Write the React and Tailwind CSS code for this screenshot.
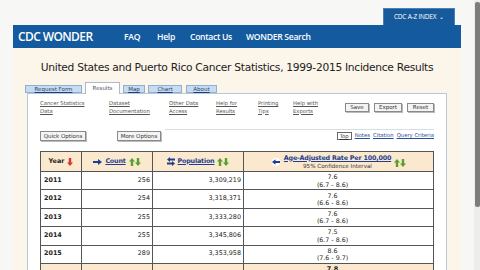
import React from "react";

const verdana = { fontFamily: '"DejaVu Sans", Verdana, sans-serif' };

function SortArrows() {
  return (
    <svg width="12" height="8" viewBox="0 0 12 8" className="inline-block">
      <path d="M3 0 L6 3.5 H4.2 V8 H1.8 V3.5 H0 Z" fill="#5aa02c" />
      <path d="M9 8 L12 4.5 H10.2 V0 H7.8 V4.5 H6 Z" fill="#5aa02c" />
    </svg>
  );
}

function RedDown() {
  return (
    <svg width="6" height="8" viewBox="0 0 6 8" className="inline-block">
      <path d="M3 8 L6 4.5 H4.2 V0 H1.8 V4.5 H0 Z" fill="#d2392b" />
    </svg>
  );
}

function RightArrow() {
  return (
    <svg width="9" height="6" viewBox="0 0 9 6" className="inline-block">
      <path d="M0 2 H5 V0 L9 3 L5 6 V4 H0 Z" fill="#1d3f8f" />
    </svg>
  );
}

function LeftArrow() {
  return (
    <svg width="10" height="8" viewBox="0 0 10 8" className="inline-block">
      <circle cx="5" cy="4" r="4" fill="#ffffff" />
      <path d="M9 3 H4.5 V1.3 L1 4 L4.5 6.7 V5 H9 Z" fill="#1d3f8f" />
    </svg>
  );
}

function SwapArrows() {
  return (
    <svg width="8" height="9" viewBox="0 0 8 9" className="inline-block">
      <path d="M8 1.5 H3 V0 L0 2.5 L3 5 V3.5 H8 Z" fill="#1d3f8f" />
      <path d="M0 5.5 H5 V4 L8 6.5 L5 9 V7.5 H0 Z" fill="#1d3f8f" />
    </svg>
  );
}

const rows = [
  ["2011", "256", "3,309,219", "7.6", "(6.7 - 8.6)"],
  ["2012", "254", "3,318,371", "7.6", "(6.6 - 8.6)"],
  ["2013", "255", "3,333,280", "7.6", "(6.7 - 8.6)"],
  ["2014", "255", "3,345,806", "7.5", "(6.7 - 8.6)"],
  ["2015", "289", "3,353,958", "8.6", "(7.6 - 9.7)"],
];

const links = [
  ["Cancer Statistics", "Data", "w-[69px]"],
  ["Dataset", "Documentation", "w-[60px]"],
  ["Other Data", "Access", "w-[47px]"],
  ["Help for", "Results", "w-[42px]"],
  ["Printing", "Tips", "w-[35px]"],
  ["Help with", "Exports", "w-[40px]"],
];

function Btn({ children, className = "" }) {
  return (
    <div
      className={`h-[9px] flex items-center justify-center border border-[#8a8a8a] bg-[#f4f4f4] text-[5.5px] text-[#333] shadow-[1px_1px_0_#bbb] ${className}`}
    >
      {children}
    </div>
  );
}

export default function App() {
  return (
    <div className="w-[480px] h-[270px] overflow-hidden flex bg-[#f7f7f5]">
      <div className="w-[474px] h-[270px] flex flex-col overflow-hidden">
        {/* top strip */}
        <div className="h-[25px] shrink-0 flex justify-end items-end pr-[19px]">
          <div
            className="w-[72px] h-[17px] bg-[#175a9b] border-t border-x border-[#4b7fb5] flex items-center justify-center gap-[3px] text-white text-[6.5px] tracking-[-0.2px]"
            style={{ fontFamily: '"Open Sans", sans-serif' }}
          >
            <span>CDC A-Z INDEX</span>
            <span className="text-[6px]">⌄</span>
          </div>
        </div>

        {/* nav bar */}
        <div
          className="mx-[13px] h-[23px] shrink-0 bg-[#135a9e] flex items-center text-white"
          style={{ fontFamily: '"Open Sans", sans-serif' }}
        >
          <div className="ml-[5px] w-[106px] text-[12px] font-semibold tracking-[-0.6px] leading-none">
            CDC WONDER
          </div>
          <div className="flex items-center text-[8.6px] font-semibold tracking-[-0.3px] pt-[1px]">
            <span className="w-[33px]">FAQ</span>
            <span className="w-[33px]">Help</span>
            <span className="w-[56px]">Contact Us</span>
            <span>WONDER Search</span>
          </div>
        </div>

        {/* content */}
        <div className="mx-[13px] shrink-0 h-[250px] bg-[#fcf5e9] flex flex-col px-[14px]" style={verdana}>
          <div className="h-[35px] shrink-0 flex items-center justify-center pt-[5px] text-[10.7px] text-[#222] tracking-[-0.3px]">
            United States and Puerto Rico Cancer Statistics, 1999-2015 Incidence Results
          </div>

          {/* tabs */}
          <div className="h-[11px] shrink-0 flex items-end text-[5.5px] text-[#1f3f7a] relative z-10">
            <div className="ml-[-2px] w-[57px] h-[8px] mb-[1px] bg-[#c7dcf0] border border-[#8fb0d4] flex items-center justify-center underline">
              Request Form
            </div>
            <div className="ml-[3px] w-[35px] h-[12px] bg-white border-x border-t border-[#a9bccf] flex items-center justify-center text-[#555]">
              Results
            </div>
            <div className="ml-[3px] w-[22px] h-[8px] mb-[1px] bg-[#c7dcf0] border border-[#8fb0d4] flex items-center justify-center underline">
              Map
            </div>
            <div className="ml-[3px] w-[34px] h-[8px] mb-[1px] bg-[#c7dcf0] border border-[#8fb0d4] flex items-center justify-center underline">
              Chart
            </div>
            <div className="ml-[4px] w-[31px] h-[8px] mb-[1px] bg-[#c7dcf0] border border-[#8fb0d4] flex items-center justify-center underline">
              About
            </div>
          </div>

          {/* panel */}
          <div className="flex-1 bg-white border-x border-t border-[#b8c8d8] mt-[-1px] px-[12px] flex flex-col">
            <div className="flex items-start pt-[6px] h-[26px] shrink-0">
              {links.map(([a, b, w]) => (
                <div key={a} className={`${w} text-[5.3px] leading-[7.5px] text-[#555] underline`}>
                  <div>{a}</div>
                  <div>{b}</div>
                </div>
              ))}
              <div className="flex-1 flex justify-end gap-[5px] pt-[3px]">
                <Btn className="w-[24px]">Save</Btn>
                <Btn className="w-[28px]">Export</Btn>
                <Btn className="w-[27px]">Reset</Btn>
              </div>
            </div>

            <div className="flex items-start h-[25px] shrink-0 pt-[11px]">
              <Btn className="w-[46px] h-[10px]">Quick Options</Btn>
              <Btn className="ml-[31px] w-[44px] h-[10px]">More Options</Btn>
              <div className="flex-1 border-t border-[#d5dde5] mt-[-2px] ml-[4px] flex justify-end items-center gap-[3px] pt-[2px] text-[5.3px] text-[#2a4f9a]">
                <div className="border border-[#666] px-[2px] leading-[6px] text-[#333] underline">Top</div>
                <span className="underline">Notes</span>
                <span className="underline">Citation</span>
                <span className="underline">Query Criteria</span>
              </div>
            </div>

            {/* table */}
            <div className="mt-[6px] shrink-0 border-t border-x border-[#555] text-[6.4px] text-[#222]">
              <div className="flex h-[20px] bg-[#fbe9cf] border-b border-[#555]">
                <div className="w-[41px] border-r border-[#555] flex items-center justify-center gap-[3px] font-bold">
                  <span>Year</span>
                  <RedDown />
                </div>
                <div className="w-[71px] border-r border-[#555] flex items-center justify-center gap-[3px]">
                  <RightArrow />
                  <span className="underline font-bold text-[#1d3f8f] tracking-[-0.2px]">Count</span>
                  <SortArrows />
                </div>
                <div className="w-[91px] border-r border-[#555] flex items-center justify-center gap-[3px]">
                  <SwapArrows />
                  <span className="underline font-bold text-[#1d3f8f] tracking-[-0.2px]">Population</span>
                  <SortArrows />
                </div>
                <div className="flex-1 flex items-center justify-center gap-[3px]">
                  <LeftArrow />
                  <div className="flex flex-col items-center leading-[8px]">
                    <span className="underline font-bold text-[#1d3f8f] tracking-[-0.2px]">
                      Age-Adjusted Rate Per 100,000
                    </span>
                    <span className="text-[5.6px] text-[#333]">95% Confidence Interval</span>
                  </div>
                  <span className="mt-[4px]">
                    <SortArrows />
                  </span>
                </div>
              </div>
              {rows.map((r) => (
                <div key={r[0]} className="flex h-[18.4px] border-b border-[#555]">
                  <div className="w-[41px] border-r border-[#555] flex items-center pl-[3px] font-bold">
                    {r[0]}
                  </div>
                  <div className="w-[71px] border-r border-[#555] flex items-center justify-end pr-[2px]">
                    {r[1]}
                  </div>
                  <div className="w-[91px] border-r border-[#555] flex items-center justify-end pr-[2px]">
                    {r[2]}
                  </div>
                  <div className="flex-1 flex flex-col items-center justify-center leading-[7.5px] text-[6.3px] pr-[12px]">
                    <span>{r[3]}</span>
                    <span>{r[4]}</span>
                  </div>
                </div>
              ))}
              <div className="flex h-[18px] bg-[#fbe9cf]">
                <div className="w-[41px] border-r border-[#555]" />
                <div className="w-[71px] border-r border-[#555]" />
                <div className="w-[91px] border-r border-[#555]" />
                <div className="flex-1 flex justify-center pr-[12px] pt-[1px] font-bold">7.8</div>
              </div>
            </div>
          </div>
        </div>
      </div>
      {/* scrollbar */}
      <div className="w-[6px] bg-[#ededed] flex flex-col pt-[2px]">
        <div className="h-[205px] mx-[0.5px] bg-[#7d7d7d] rounded-[2px]" />
      </div>
    </div>
  );
}
